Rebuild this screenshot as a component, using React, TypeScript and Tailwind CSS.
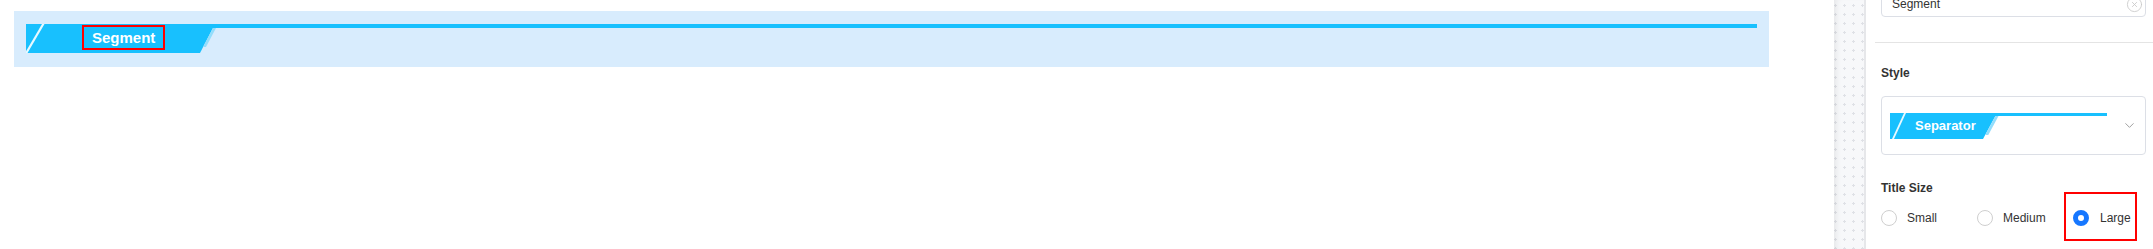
import { ChevronDown, CircleX } from "lucide-react";

const BLUE = "#18c0fe";

// ribbon style separator (big one on the canvas, small one in the select)
function SeparatorBar({ title, small, highlight }: { title: string; small?: boolean; highlight?: boolean }) {
  if (small) {
    return (
      <div className="flex w-[217px] h-[26px]">
        <div className="relative w-[110px] h-[26px] shrink-0">
          <svg width="110" height="26" viewBox="0 0 110 26" className="absolute left-0 top-0">
            <rect x="0" y="0" width="110" height="3" fill={BLUE} />
            <polygon points="0,0 107,0 93,26 0,26" fill={BLUE} />
            <polygon points="14,0 16,0 4,26 2,26" fill="#ffffff" opacity="0.9" />
            <polygon points="105.4,3 108.5,3 98.3,22 95.2,22" fill="#93ddfb" />
          </svg>
          <div className="relative flex h-full items-center pl-[25px] text-[13px] font-bold leading-[16px] text-white">
            {title}
          </div>
        </div>
        <div className="flex-1 h-[3px] bg-[#18c0fe]" />
      </div>
    );
  }

  return (
    <div className="flex h-[29px]">
      <div className="relative w-[192px] h-[29px] shrink-0">
        <svg width="192" height="29" viewBox="0 0 192 29" className="absolute left-0 top-0">
          <rect x="0" y="0" width="192" height="4" fill={BLUE} />
          <polygon points="0,0 189,0 174,29 0,29" fill={BLUE} />
          <polygon points="16,0 18.5,0 1.5,29 -1,29" fill="#ffffff" opacity="0.9" />
          <polygon points="187,4 190,4 180,23 177,23" fill="#93ddfb" />
        </svg>
        <div className="relative flex h-full items-start pt-[1px] pl-[56px]">
          <span
            className={
              highlight
                ? "border-2 border-[#f00] px-[8px] py-[2px] text-[15px] font-bold leading-[17px] text-white"
                : "px-[10px] py-[4px] text-[15px] font-bold leading-[17px] text-white"
            }
          >
            {title}
          </span>
        </div>
      </div>
      <div className="flex-1 h-[4px] bg-[#18c0fe]" />
    </div>
  );
}

function Radio({ label, checked }: { label: string; checked?: boolean }) {
  return (
    <>
      <span
        className={
          checked
            ? "w-[16px] h-[16px] shrink-0 rounded-full border-[5px] border-[#1677ff] bg-white"
            : "w-[16px] h-[16px] shrink-0 rounded-full border border-[#cfcfcf] bg-white"
        }
      />
      <span className="text-[12px] leading-[16px] text-[#333]">{label}</span>
    </>
  );
}

export default function App() {
  return (
    <div className="flex h-[249px] w-full overflow-hidden bg-white font-['Liberation_Sans',Arial,sans-serif]">
      {/* canvas */}
      <div className="flex-1 min-w-0 pl-[14px] pt-[11px] pr-[65px]">
        <div className="bg-[#d8ecfd] px-[12px] pt-[13px] pb-[14px]">
          <SeparatorBar title="Segment" highlight />
        </div>
      </div>

      {/* dotted splitter */}
      <div className="w-[32px] shrink-0 border-r-2 border-[#e6e7ea] bg-[#f7f8fa] bg-[radial-gradient(circle,#dfe1e6_1.2px,transparent_1.4px)] bg-[length:9px_9px] bg-[position:6px_1px] shadow-[inset_6px_0_6px_-4px_rgba(0,0,0,0.08)]" />

      {/* property panel */}
      <div className="w-[287px] shrink-0 pl-[9px] bg-white text-[#333]">
        <div className="pl-[6px] pr-[7px]">
          <div className="-mt-[15px] h-[32px] flex items-center rounded-[4px] border border-[#dcdfe6] pl-[10px] pr-[2px]">
            <span className="flex-1 mt-[6px] text-[12px] leading-[16px] text-[#333]">Segment</span>
            <CircleX size={17} strokeWidth={1.2} color="#c9c9c9" className="mt-[6px]" />
          </div>
        </div>

        <div className="mt-[25px] h-px bg-[#e4e4e4]" />

        <div className="pl-[6px] pr-[7px]">
          <div className="mt-[21px] text-[12px] font-bold leading-[18px]">Style</div>

          <div className="mt-[14px] h-[59px] flex items-center rounded-[4px] border border-[#dcdfe6] pl-[8px] pr-[8px]">
            <SeparatorBar title="Separator" small />
            <ChevronDown size={15} strokeWidth={1.5} color="#9a9a9a" className="ml-auto" />
          </div>

          <div className="mt-[24px] text-[12px] font-bold leading-[18px]">Title Size</div>

          <div className="mt-[13px] h-[16px] flex items-center">
            <div className="w-[96px] flex items-center gap-[10px]">
              <Radio label="Small" />
            </div>
            <div className="w-[96px] flex items-center gap-[10px]">
              <Radio label="Medium" />
            </div>
            <div className="-ml-[9px] -mt-[3px] h-[49px] flex items-center gap-[11px] border-2 border-[#f00] pt-[3px] pl-[7px] pr-[4px]">
              <Radio label="Large" checked />
            </div>
          </div>
        </div>
      </div>
    </div>
  );
}
